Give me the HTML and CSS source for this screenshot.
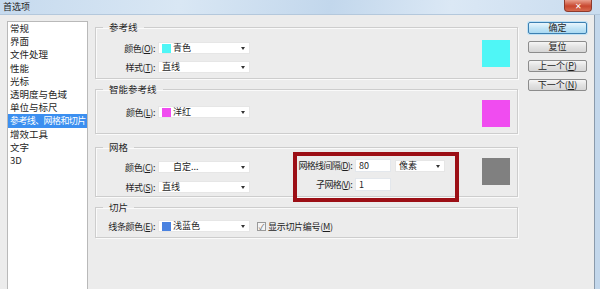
FILE: index.html
```html
<!DOCTYPE html>
<html lang="zh-CN">
<head>
    <meta charset="UTF-8">
    <title>首选项</title>
    <link rel="stylesheet" href="styles.css">
</head>
<body>
<div class="titlebar">
    <span class="title">首选项</span>
    <span class="close">✕</span>
</div>
<div class="window">
    <ul class="nav">
        <li>常规</li>
        <li>界面</li>
        <li>文件处理</li>
        <li>性能</li>
        <li>光标</li>
        <li>透明度与色域</li>
        <li>单位与标尺</li>
        <li class="select">参考线、网格和切片</li>
        <li>增效工具</li>
        <li>文字</li>
        <li>3D</li>
    </ul>
    <div class="main">
        <fieldset class="group g-guide">
            <legend>参考线</legend>
            <div class="group-body">
                <div class="rows">
                    <div class="row"><label>颜色(<u>O</u>):</label><div class="select-box"><i class="chip cyan"></i>青色<span class="caret"></span></div></div>
                    <div class="row"><label>样式(<u>T</u>):</label><div class="select-box">直线<span class="caret"></span></div></div>
                </div>
                <div class="swatch cyan"></div>
            </div>
        </fieldset>
        <fieldset class="group g-smart">
            <legend>智能参考线</legend>
            <div class="group-body">
                <div class="rows">
                    <div class="row"><label>颜色(<u>L</u>):</label><div class="select-box"><i class="chip magenta"></i>洋红<span class="caret"></span></div></div>
                </div>
                <div class="swatch magenta"></div>
            </div>
        </fieldset>
        <fieldset class="group g-grid">
            <legend>网格</legend>
            <div class="group-body">
                <div class="rows">
                    <div class="row"><label>颜色(<u>C</u>):</label><div class="select-box center">自定...<span class="caret"></span></div></div>
                    <div class="row"><label>样式(<u>S</u>):</label><div class="select-box">直线<span class="caret"></span></div></div>
                </div>
                <div class="rows spacing">
                    <div class="row"><label class="wide">网格线间隔(<u>D</u>):</label><div class="field">80</div><div class="select-box unit">像素<span class="caret"></span></div></div>
                    <div class="row"><label class="wide">子网格(<u>V</u>):</label><div class="field">1</div></div>
                </div>
                <div class="swatch gray"></div>
            </div>
        </fieldset>
        <fieldset class="group g-slice">
            <legend>切片</legend>
            <div class="group-body">
                <div class="rows">
                    <div class="row"><label>线条颜色(<u>E</u>):</label><div class="select-box"><i class="chip blue"></i>浅蓝色<span class="caret"></span></div>
                        <span class="check">✓</span><span class="check-label">显示切片编号(<u>M</u>)</span></div>
                </div>
            </div>
        </fieldset>
        <div class="mark"></div>
    </div>
    <div class="buttons">
        <div class="btn default">确定</div>
        <div class="btn">复位</div>
        <div class="btn">上一个(<u>P</u>)</div>
        <div class="btn">下一个(<u>N</u>)</div>
    </div>
</div>
</body>
</html>
```

FILE: styles.css
```css
*{
    padding: 0;
    margin: 0;
    box-sizing: border-box;
}
li{
    list-style: none;
}
body{
    width: 600px;
    height: 289px;
    overflow: hidden;
    background: #ececec;
    font-family: "Noto Sans CJK SC", "Noto Sans", sans-serif;
    font-size: 9px;
    color: #1e1e1e;
}
u{
    text-decoration: underline;
}
.titlebar{
    height: 15px;
    display: flex;
    justify-content: space-between;
    align-items: flex-start;
    background: linear-gradient(100deg, #c6daee 0%, #d9e7f4 30%, #c2d7ec 55%, #dbe8f5 75%, #c9dcef 100%);
    border-bottom: 1px solid #b4c8dc;
}
.titlebar .title{
    padding-left: 3px;
    line-height: 13px;
    font-size: 9px;
    color: #222;
}
.titlebar .close{
    width: 28px;
    height: 12px;
    margin-right: 8px;
    background: linear-gradient(#e9a08e, #c8472f 55%, #d76a4f);
    border: 1px solid #8e3a2c;
    border-top: none;
    border-radius: 0 0 4px 4px;
    color: #fff;
    font-size: 8px;
    line-height: 11px;
    text-align: center;
}
.window{
    height: 274px;
    display: flex;
    align-items: flex-start;
    border-right: 5px solid #c3d7eb;
    box-shadow: inset -1px 0 0 #8a9aab;
}
.nav{
    width: 81px;
    height: 268px;
    margin: 6px 0 0 7px;
    background: #fff;
    border: 1px solid #b9b9b9;
    border-bottom: none;
    white-space: nowrap;
    overflow: hidden;
}
.nav li{
    height: 13.2px;
    line-height: 13px;
    padding-left: 2px;
    font-size: 9.5px;
}
.nav li.select{
    background: #3b8ff0;
    color: #fff;
    font-size: 9px;
    letter-spacing: -0.6px;
}
.main{
    position: relative;
    width: 430px;
    padding: 5px 0 0 7px;
}
.group{
    width: 423px;
    min-width: 0;
    border: 1px solid #cdcdcd;
    box-shadow: inset 1px 1px 0 #fafafa, 1px 1px 0 #fafafa;
    padding: 0 7px 0 0;
}
.group legend{
    margin-left: 7px;
    padding: 0 6px;
    line-height: 14px;
    font-size: 9.5px;
}
.group-body{
    display: flex;
    align-items: flex-start;
}
.rows{
    display: flex;
    flex-direction: column;
    gap: 7px;
}
.row{
    display: flex;
    align-items: center;
    height: 12px;
}
.row label{
    width: 62px;
    text-align: right;
    padding-right: 3px;
    white-space: nowrap;
    letter-spacing: -0.4px;
}
.row label.wide{
    width: 70px;
    letter-spacing: -0.7px;
}
.select-box{
    position: relative;
    width: 92px;
    height: 12px;
    display: flex;
    align-items: center;
    padding-left: 3px;
    background: #fff;
    border: 1px solid #e6e6e6;
    line-height: 10px;
}
.select-box.center{
    padding-left: 14px;
}
.select-box.unit{
    width: 50px;
    margin-left: 4px;
}
.caret{
    position: absolute;
    right: 4px;
    top: 4px;
    border-left: 2px solid transparent;
    border-right: 2px solid transparent;
    border-top: 3px solid #333;
}
.chip{
    width: 9px;
    height: 9px;
    margin-right: 2px;
}
.cyan{
    background: #4ff6f6;
}
.magenta{
    background: #f04cf0;
}
.blue{
    background: #4a82e0;
}
.gray{
    background: #808080;
}
.swatch{
    width: 28px;
    height: 27px;
    margin-left: auto;
}
.field{
    width: 36px;
    height: 13px;
    padding-left: 3px;
    background: #fff;
    border: 1px solid #e3e7ec;
    line-height: 11px;
}
.g-guide .group-body{
    padding: 6px 0 5px;
}
.g-guide .rows{
    margin-top: 2px;
}
.g-smart{
    margin-top: 3px;
}
.g-smart .group-body{
    padding: 4px 0 6px;
}
.g-smart .rows{
    margin-top: 6px;
}
.g-grid{
    margin-top: 6px;
}
.g-grid .group-body{
    padding: 4px 0 3px;
}
.g-grid .rows{
    margin-top: 3px;
    gap: 8px;
}
.g-grid .rows.spacing{
    margin: 1px 0 0 35px;
    gap: 6px;
}
.g-grid .spacing .row{
    height: 13px;
}
.g-slice{
    margin-top: 3px;
}
.g-slice .group-body{
    padding: 6px 0 5px;
}
.check{
    width: 9px;
    height: 9px;
    margin: 0 2px 0 7px;
    border: 1px solid #9a9a9a;
    background: #f4f4f4;
    color: #666;
    font-size: 8px;
    line-height: 7px;
    text-align: center;
}
.check-label{
    letter-spacing: -0.3px;
}
.mark{
    position: absolute;
    left: 205px;
    top: 137px;
    width: 166px;
    height: 50px;
    border: 4px solid #9c0f16;
}
.buttons{
    width: 59px;
    margin: 7px 0 0 10px;
    display: flex;
    flex-direction: column;
    gap: 7px;
}
.btn{
    height: 12px;
    line-height: 10px;
    text-align: center;
    font-size: 9px;
    border: 1px solid #8c8c8c;
    border-radius: 2px;
    background: linear-gradient(#f6f6f6, #e2e2e2 50%, #d6d6d6);
}
.btn.default{
    border-color: #3c7fb1;
    background: linear-gradient(#eaf6fd, #c4e5f6 50%, #a9d9f2);
    box-shadow: 0 0 0 1px #bfe1f5;
}
```
